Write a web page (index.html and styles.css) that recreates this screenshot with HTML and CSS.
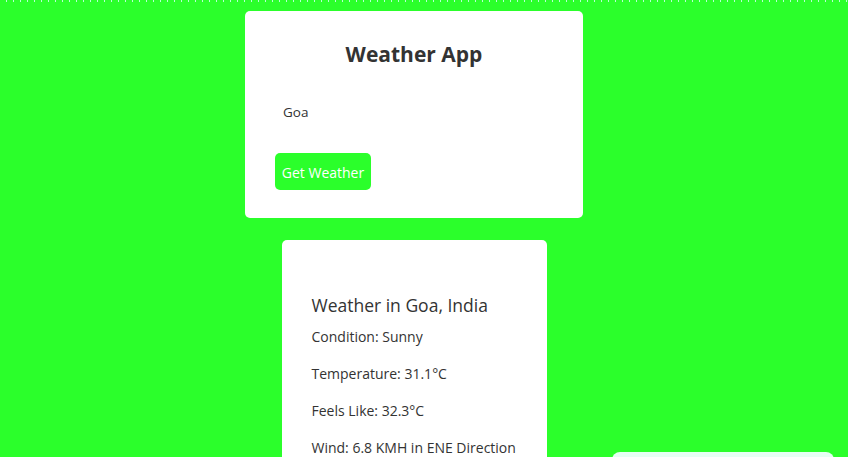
FILE: index.html
```html
<!DOCTYPE html>
<html>
<head>
<meta charset="utf-8">
<link rel="stylesheet" href="styles.css">
</head>
<body>
<div class="topline"></div>
<main class="page">
  <section class="card app">
    <h2 class="title">Weather App</h2>
    <input class="city" type="text" value="Goa">
    <button class="btn">Get Weather</button>
  </section>
  <section class="card result">
    <h3 class="place">Weather in Goa, India</h3>
    <p class="row">Condition: Sunny</p>
    <p class="row">Temperature: 31.1°C</p>
    <p class="row">Feels Like: 32.3°C</p>
    <p class="row">Wind: 6.8 KMH in ENE Direction</p>
  </section>
</main>
<div class="toast"></div>
</body>
</html>
```
FILE: styles.css
```css
html, body {
  margin: 0;
  height: 100%;
  overflow: hidden;
}
body {
  background: #2bff2b;
  font-family: "Open Sans", "Noto Sans", sans-serif;
  color: #333;
  position: relative;
}
.topline {
  height: 2px;
  background: repeating-linear-gradient(90deg, #2bff2b 0 6px, #b8ffd8 6px 7px);
}
.page {
  width: 828px;
  display: flex;
  flex-direction: column;
  align-items: center;
  gap: 22px;
  padding-top: 9px;
}
.card {
  background: #fff;
  border-radius: 5px;
  box-sizing: border-box;
}
.app {
  width: 338px;
  padding: 30px 30px 28px;
  display: flex;
  flex-direction: column;
  align-items: flex-start;
}
.title {
  align-self: stretch;
  text-align: center;
  margin: 0;
  font-size: 21px;
  line-height: 26px;
  font-weight: 700;
}
.city {
  margin-top: 27px;
  height: 36px;
  width: 100%;
  box-sizing: border-box;
  border: none;
  outline: none;
  padding: 0 8px;
  font-family: inherit;
  font-size: 13.5px;
  color: #333;
  background: #fff;
}
.btn {
  margin-top: 23px;
  width: 96px;
  height: 37px;
  border: none;
  border-radius: 5px;
  background: #2bff2b;
  color: #fff;
  font-family: inherit;
  font-size: 14px;
  padding: 1px 0 0;
}
.result {
  width: 265px;
  padding: 53px 30px 30px;
}
.place {
  margin: 0 0 10px;
  font-size: 17.5px;
  line-height: 24px;
  font-weight: 500;
}
.row {
  margin: 0 0 18px;
  font-size: 14px;
  line-height: 19px;
}
.toast {
  position: absolute;
  left: 612px;
  top: 452px;
  width: 222px;
  height: 40px;
  background: #e6fff4;
  border-radius: 8px;
}
```
